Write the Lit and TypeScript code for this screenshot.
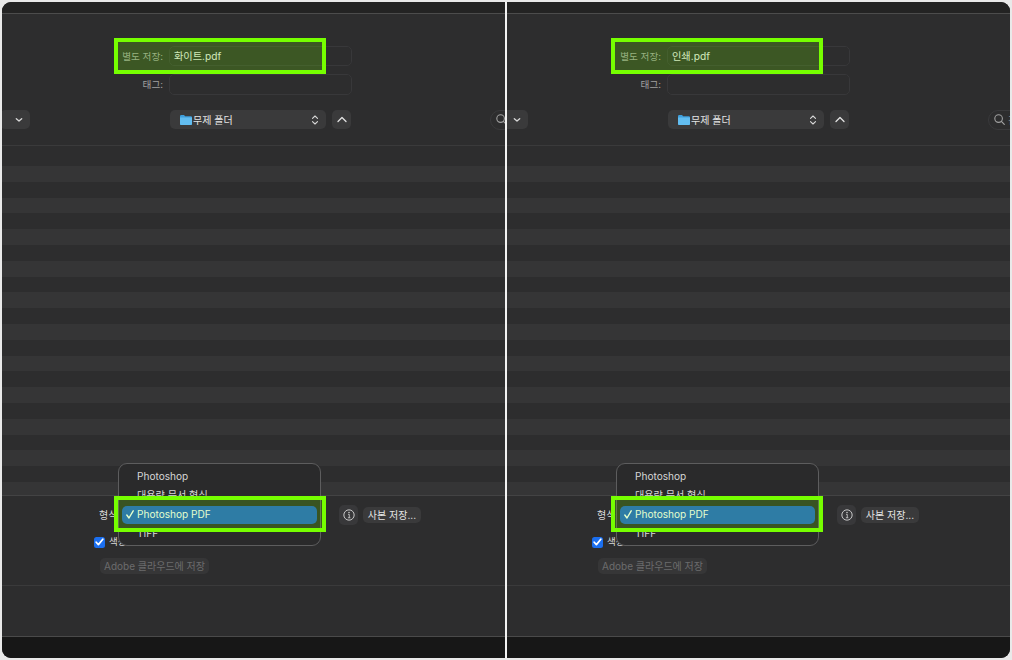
import { LitElement, html, css } from "lit";
import { customElement } from "lit/decorators.js";

const chevDown = html`<svg width="8" height="6" viewBox="0 0 8 6"><path d="M1.3 1.7 L4 4.1 L6.7 1.7" fill="none" stroke="#d8d8d8" stroke-width="1.3" stroke-linecap="round" stroke-linejoin="round"/></svg>`;
const stepper = html`<svg width="8" height="12" viewBox="0 0 8 12"><path d="M1.5 4.4 L4 2 L6.5 4.4 M1.5 7.6 L4 10 L6.5 7.6" fill="none" stroke="#d8d8d8" stroke-width="1.1" stroke-linecap="round" stroke-linejoin="round"/></svg>`;
const chevUp = html`<svg width="10" height="7" viewBox="0 0 10 7"><path d="M1 5.5 L5 1.5 L9 5.5" fill="none" stroke="#e2e2e2" stroke-width="1.3" stroke-linecap="round" stroke-linejoin="round"/></svg>`;
const folder = html`<svg width="12" height="10" viewBox="0 0 12 10"><path d="M0 1.2 Q0 0 1.2 0 H4 L5.2 1.3 H10.8 Q12 1.3 12 2.5 V8.8 Q12 10 10.8 10 H1.2 Q0 10 0 8.8 Z" fill="#3f9fdc"/><path d="M0 2.6 H12 V8.8 Q12 10 10.8 10 H1.2 Q0 10 0 8.8 Z" fill="#62bdf0"/></svg>`;
const search = html`<svg width="11" height="11" viewBox="0 0 11 11"><circle cx="4.6" cy="4.6" r="3.8" fill="none" stroke="#a0a0a0" stroke-width="1.1"/><path d="M7.4 7.4 L10.3 10.3" stroke="#a0a0a0" stroke-width="1.2" stroke-linecap="round"/></svg>`;
const info = html`<svg width="12" height="12" viewBox="0 0 13 13"><circle cx="6.5" cy="6.5" r="5.6" fill="none" stroke="#d4d4d4" stroke-width="1"/><circle cx="6.5" cy="3.9" r=".8" fill="#d4d4d4"/><path d="M5.5 5.8 H6.8 V9.4 M5.3 9.5 H8" fill="none" stroke="#d4d4d4" stroke-width=".9"/></svg>`;
const check = html`<svg width="9" height="8" viewBox="0 0 9 8"><path d="M1.2 4.2 L3.4 6.6 L7.8 1.2" fill="none" stroke="#fff" stroke-width="1.7" stroke-linecap="round" stroke-linejoin="round"/></svg>`;
const tick = html`<svg width="8" height="9" viewBox="0 0 8 9"><path d="M.8 5 L3 8 L7.2 .8" fill="none" stroke="#fff" stroke-width="1.4" stroke-linecap="round" stroke-linejoin="round"/></svg>`;

const rows = Array.from({ length: 11 });

@customElement("app-root")
export class AppRoot extends LitElement {
  static styles = css`
    :host {
      display: block;
      width: 1012px;
      height: 660px;
      background: #e9e9e9;
      font-family: Inter, "Noto Sans CJK KR", "Liberation Sans", sans-serif;
      overflow: hidden;
    }
    .split {
      display: grid;
      grid-template-columns: 503px 2px 503px;
      padding: 2px;
      height: 660px;
      box-sizing: border-box;
    }
    .divider { background: #f2f2f2; }
    .panel {
      position: relative;
      overflow: hidden;
      background: #2d2d2e;
      --shift: -2px;
      --hl: 114px;
    }
    .panel.left { border-radius: 9px 0 0 9px; }
    .panel.right {
      border-radius: 0 9px 9px 0;
      --shift: -9px;
      --hl: 113px;
    }
    .canvas {
      position: relative;
      width: 540px;
      height: 656px;
      margin-left: var(--shift);
      display: flex;
      flex-direction: column;
    }
    .topbar {
      height: 11px;
      background: #232323;
      border-bottom: 1px solid #4c4c4c;
      flex: none;
    }
    .head {
      height: 131px;
      flex: none;
      border-bottom: 1px solid #3a3a3b;
      display: flex;
      flex-direction: column;
    }
    .formrow {
      display: flex;
      align-items: center;
      margin-top: 8px;
    }
    .formrow:first-child { margin-top: 32px; }
    .label {
      width: 163px;
      text-align: right;
      font-size: 9.6px;
      color: #a0a0a0;
      flex: none;
      padding-bottom: 1px;
    }
    .field {
      margin-left: 6px;
      width: 183px;
      height: 20px;
      box-sizing: border-box;
      border: 1px solid #38383a;
      border-radius: 5px;
      padding-left: 4px;
      font-size: 10.2px;
      line-height: 19px;
      color: #e6e6e6;
    }
    .tag { height: 21px; }
    .toolbar {
      display: flex;
      align-items: center;
      margin-top: 15px;
      height: 19px;
    }
    .btn {
      background: #3a3a3b;
      border-radius: 5px;
      display: flex;
      align-items: center;
      justify-content: center;
      flex: none;
      color: #e4e4e4;
      font-size: 10px;
    }
    .view { width: 30px; height: 19px; padding-left: 8px; box-sizing: border-box; }
    .select {
      margin-left: 140px;
      width: 156px;
      height: 19px;
      justify-content: flex-start;
      padding: 0 7px 0 10px;
      box-sizing: border-box;
      gap: 1px;
    }
    .select .name { flex: 1; }
    .up { margin-left: 6px; width: 19px; height: 19px; }
    .search {
      margin-left: 139px;
      width: 120px;
      height: 20px;
      box-sizing: border-box;
      border: 1px solid #3a3a3c;
      border-radius: 10px;
      display: flex;
      align-items: center;
      gap: 3px;
      padding-left: 5px;
      font-size: 10px;
      color: #8c8c8c;
      flex: none;
    }
    .list {
      height: 349px;
      flex: none;
      padding-top: 4.2px;
      box-sizing: border-box;
      overflow: hidden;
      width: 1012px;
    }
    .stripe { height: 15.8px; }
    .stripe.on { background: #353536; }
    .footer {
      border-top: 1px solid #434344;
      height: 89px;
      flex: none;
      border-bottom: 1px solid #3a3a3b;
      display: flex;
      flex-direction: column;
    }
    .fmt {
      display: flex;
      align-items: center;
      margin-top: 9px;
      height: 20px;
      padding-left: 99px;
    }
    .fmt .lbl { width: 240px; flex: none; font-size: 10px; color: #dcdcdc; padding-bottom: 1px; }
    .info { width: 19px; height: 20px; background: #38383a; }
    .copy { margin-left: 5px; width: 58px; height: 16px; padding-bottom: 1px; box-sizing: border-box; }
    .chk {
      display: flex;
      align-items: center;
      gap: 4px;
      margin: 11px 0 0 94px;
      height: 12px;
      font-size: 9.5px;
      line-height: 11px;
      color: #d8d8d8;
    }
    .chk .txt { padding-bottom: 2px; }
    .box {
      width: 11px;
      height: 11px;
      border-radius: 2.5px;
      background: #1b6ff0;
      display: flex;
      align-items: center;
      justify-content: center;
      flex: none;
    }
    .adobe {
      margin: 10px 0 0 100px;
      width: 109px;
      height: 16px;
      padding-bottom: 1px;
      box-sizing: border-box;
      background: #363637;
      color: #6c6c6d;
      white-space: nowrap;
    }
    .rest {
      height: 50px;
      flex: none;
      border-bottom: 1px solid #4a4a4a;
    }
    .bottom {
      flex: 1;
      background: #171717;
    }
    .popup {
      position: absolute;
      left: 118px;
      top: 461px;
      width: 203px;
      height: 83px;
      box-sizing: border-box;
      background: #2a2a2b;
      border: 1px solid #5d5d5e;
      border-radius: 9px;
      padding: 3.5px 3px;
      font-size: 10.1px;
      color: #d6d6d6;
    }
    .item {
      height: 19px;
      line-height: 17px;
      padding-left: 15px;
      position: relative;
      white-space: nowrap;
    }
    .item.sel {
      height: 18px;
      margin-bottom: 1px;
      padding-bottom: 1px;
      box-sizing: border-box;
      background: #1c5ccf;
      border-radius: 5px;
      color: #fff;
      display: flex;
      align-items: center;
    }
    .item.sel svg { position: absolute; left: 4px; top: 4px; }
    .hl {
      position: absolute;
      left: var(--hl);
      width: 212px;
      height: 36px;
      box-sizing: border-box;
      border: 4px solid #76ff00;
      background: rgba(118, 255, 0, 0.2);
    }
    .hl.a { top: 36px; }
    .hl.b { top: 494px; }
  `;

  private panel(side: string, file: string) {
    return html`
      <div class="panel ${side}">
        <div class="canvas">
          <div class="topbar"></div>
          <div class="head">
            <div class="formrow">
              <div class="label">별도 저장:</div>
              <div class="field">${file}</div>
            </div>
            <div class="formrow">
              <div class="label">태그:</div>
              <div class="field tag"></div>
            </div>
            <div class="toolbar">
              <div class="btn view">${chevDown}</div>
              <div class="btn select">${folder}<span class="name">무제 폴더</span>${stepper}</div>
              <div class="btn up">${chevUp}</div>
              <div class="search">${search}<span>검색</span></div>
            </div>
          </div>
          <div class="list">
            ${rows.map(
              () => html`<div class="stripe"></div><div class="stripe on"></div>`
            )}
          </div>
          <div class="footer">
            <div class="fmt">
              <span class="lbl">형식:</span>
              <div class="btn info">${info}</div>
              <div class="btn copy">사본 저장...</div>
            </div>
            <div class="chk"><span class="box">${check}</span><span class="txt">색상 프로파일 포함</span></div>
            <div class="btn adobe">Adobe 클라우드에 저장</div>
          </div>
          <div class="rest"></div>
          <div class="bottom"></div>
          <div class="popup">
            <div class="item">Photoshop</div>
            <div class="item">대용량 문서 형식</div>
            <div class="item sel">${tick}Photoshop PDF</div>
            <div class="item">TIFF</div>
          </div>
          <div class="hl a"></div>
          <div class="hl b"></div>
        </div>
      </div>
    `;
  }

  render() {
    return html`
      <div class="split">
        ${this.panel("left", "화이트.pdf")}
        <div class="divider"></div>
        ${this.panel("right", "인쇄.pdf")}
      </div>
    `;
  }
}
